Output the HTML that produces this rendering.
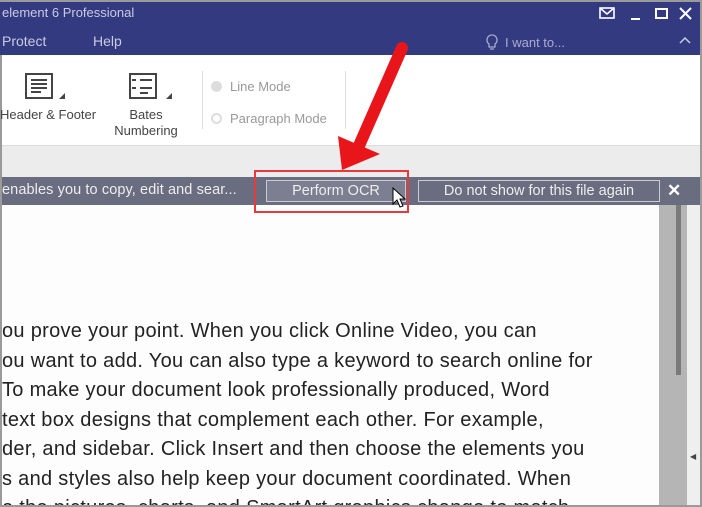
<!DOCTYPE html><html style="height:507px;overflow:hidden"><head><style>
body{margin:0;width:702px;height:507px;overflow:hidden;background:#9a9a9a;font-family:"Liberation Sans",sans-serif;position:relative}
.a{position:absolute}
</style></head><body>
<div class="a" style="left:0;top:2px;width:700px;height:53px;background:#343a80"></div>
<div class="a" style="left:2px;top:5px;color:#c9cbe2;font-size:13px">element 6 Professional</div>
<div class="a" style="left:2px;top:33px;color:#c9cbe2;font-size:14px">Protect</div>
<div class="a" style="left:93px;top:33px;color:#c9cbe2;font-size:14px">Help</div>
<svg class="a" style="left:485px;top:33px" width="14" height="18" fill="none" stroke="#a9acd0" stroke-width="1.3"><path d="M7 2a5 5 0 0 0-3 9v3h6v-3a5 5 0 0 0-3-9zM5 16h4"/></svg>
<div class="a" style="left:505px;top:35px;color:#a9acd0;font-size:13px">I want to...</div>
<svg class="a" style="left:678px;top:36px" width="14" height="10" fill="none" stroke="#c9cbe2" stroke-width="1.5"><path d="M2 7l5-5 5 5"/></svg>
<svg class="a" style="left:598px;top:6px" width="100" height="16" viewBox="0 0 100 16" fill="none" stroke="#fff" stroke-width="1.6"><rect x="2" y="2" width="14" height="10"/><path d="M2 2l7 6 7-6"/><path d="M33 13h9" stroke-width="2"/><rect x="58" y="3" width="11" height="9" stroke-width="2"/><path d="M82 2l11 11M93 2L82 13" stroke-width="2"/></svg>
<div class="a" style="left:2px;top:55px;width:698px;height:90px;background:#fff;border-bottom:1px solid #ddd"></div>
<svg class="a" style="left:24px;top:72px" width="150" height="30" fill="none" stroke="#444" stroke-width="2"><rect x="2" y="2" width="26" height="24"/><path d="M7 8h16M7 12h16M7 16h16M7 20h10"/><path d="M41 27l-6 0 6-6z" fill="#444" stroke="none"/><rect x="106" y="2" width="26" height="24"/><path d="M116 8h12M116 16h12M116 21h8M108 8h4M108 16h4"/><path d="M148 27l-6 0 6-6z" fill="#444" stroke="none"/></svg>
<div class="a" style="left:0;top:107px;color:#444;font-size:13px">Header &amp; Footer</div>
<div class="a" style="left:111px;top:107px;width:70px;color:#444;font-size:13px;text-align:center;line-height:16px">Bates<br>Numbering</div>
<div class="a" style="left:202px;top:71px;width:1px;height:58px;background:#ddd"></div>
<div class="a" style="left:345px;top:71px;width:1px;height:58px;background:#ddd"></div>
<div class="a" style="left:211px;top:81px;width:11px;height:11px;border-radius:50%;background:#ddd"></div>
<div class="a" style="left:211px;top:113px;width:7px;height:7px;border-radius:50%;border:2px solid #ddd"></div>
<div class="a" style="left:230px;top:79px;color:#999;font-size:13px">Line Mode</div>
<div class="a" style="left:230px;top:111px;color:#999;font-size:13px">Paragraph Mode</div>
<div class="a" style="left:2px;top:146px;width:698px;height:31px;background:#ececec"></div>
<div class="a" style="left:2px;top:177px;width:698px;height:28px;background:#6a6c80"></div>
<div class="a" style="left:2px;top:182px;color:#eee;font-size:14.5px;letter-spacing:0.1px">enables you to copy, edit and sear...</div>
<div class="a" style="left:266px;top:180px;width:138px;height:20px;border:1px solid #ccc;background:#7c7e92;color:#eee;font-size:14.5px;text-align:center;line-height:20px">Perform OCR</div>
<div class="a" style="left:418px;top:180px;width:240px;height:20px;border:1px solid #ccc;color:#eee;font-size:14.5px;text-align:center;line-height:20px">Do not show for this file again</div>
<div class="a" style="left:667px;top:181px;color:#fff;font-size:17px;font-weight:bold">✕</div>
<div class="a" style="left:2px;top:205px;width:657px;height:300px;background:#fdfdfd"></div>
<div class="a" style="left:659px;top:205px;width:28px;height:300px;background:#b5b5b5"></div>
<div class="a" style="left:676px;top:205px;width:5px;height:170px;background:#7a7a7a"></div>
<div class="a" style="left:687px;top:205px;width:13px;height:300px;background:#efefef"></div>
<div class="a" style="left:690px;top:452px;color:#444;font-size:8px">◀</div>
<div class="a" style="left:2px;top:317px;width:657px;overflow:hidden;color:#222;font-size:20px;letter-spacing:0.3px;line-height:29.5px;white-space:nowrap">ou prove your point. When you click Online Video, you can<br>ou want to add. You can also type a keyword to search online for<br>To make your document look professionally produced, Word<br>text box designs that complement each other. For example,<br>der, and sidebar. Click Insert and then choose the elements you<br>s and styles also help keep your document coordinated. When<br>e the pictures, charts, and SmartArt graphics change to match</div>
<div class="a" style="left:254px;top:170px;width:155px;height:43px;border:2px solid #e8393c;box-sizing:border-box"></div>
<svg class="a" style="left:330px;top:38px" width="90" height="140"><path d="M72 10 L28 110" stroke="#e8161b" stroke-width="12" stroke-linecap="round"/><path d="M8 98 L50 116 L12 132 Z" fill="#e8161b"/></svg>
<svg class="a" style="left:392px;top:187px" width="14" height="22"><path d="M1 1v16l4-4 3 7 3-1-3-7h5z" fill="#fff" stroke="#000"/></svg>
<div class="a" style="left:0;top:505px;width:702px;height:2px;background:#9a9a9a"></div>
</body></html>
